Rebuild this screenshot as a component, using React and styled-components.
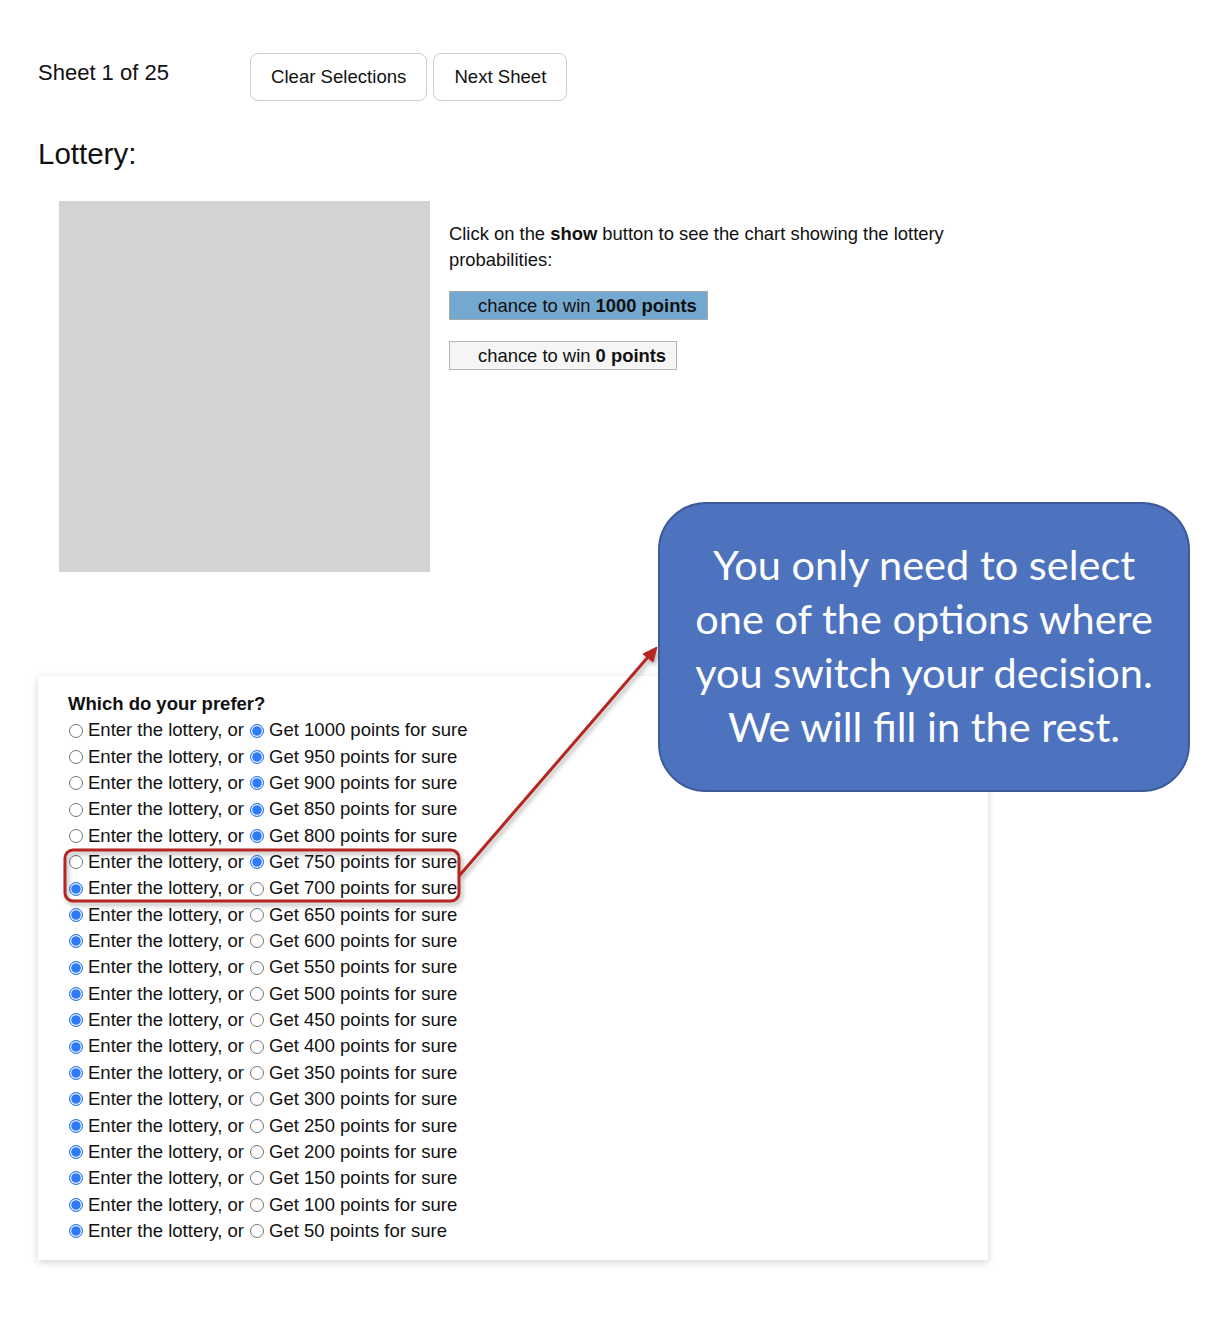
import React from 'react';
import styled, { createGlobalStyle } from 'styled-components';

const Global = createGlobalStyle`
  body {
    margin: 0;
    background: #fff;
    font-family: "Liberation Sans", Arial, Helvetica, sans-serif;
    color: #111;
  }
`;

const Page = styled.div`
  position: relative;
  width: 1210px;
  min-height: 1336px;
  padding-left: 38px;
  box-sizing: border-box;
`;

const Header = styled.div`
  display: flex;
  align-items: flex-start;
  padding-top: 53px;
`;

const SheetLabel = styled.div`
  width: 212px;
  font-size: 22px;
  line-height: 40px;
`;

const Buttons = styled.div`
  display: flex;
  gap: 6px;
`;

const Button = styled.button`
  height: 48px;
  padding: 0 20px;
  font-family: inherit;
  font-size: 18.6px;
  color: #111;
  background: #fff;
  border: 1.5px solid #cfcfcf;
  border-radius: 8px;
`;

const Heading = styled.h2`
  margin: 36px 0 30px;
  font-size: 29.5px;
  font-weight: normal;
  line-height: 34px;
`;

const LotteryRow = styled.div`
  display: flex;
  gap: 19px;
  padding-left: 21px;
`;

const Chart = styled.div`
  width: 371px;
  height: 371px;
  background: #d3d3d3;
  flex-shrink: 0;
`;

const Info = styled.div`
  padding-top: 20px;
  width: 540px;
  font-size: 18.4px;
  line-height: 26px;
`;

const Legend = styled.div`
  display: inline-block;
  margin-top: ${p => p.$first ? 18 : 21}px;
  height: 29px;
  line-height: 27px;
  box-sizing: border-box;
  padding: 0 10px 0 28px;
  background: ${p => p.$fill};
  border: 1.5px solid ${p => p.$border};
  font-size: 18.4px;
`;

const Card = styled.div`
  margin-top: 104px;
  width: 950px;
  box-sizing: border-box;
  padding: 15px 30px 16px;
  background: #fff;
  box-shadow: 0 2px 8px rgba(0, 0, 0, 0.18);
  font-size: 18.5px;
`;

const Line = styled.div`
  height: 26.35px;
  line-height: 26.35px;
  display: flex;
  align-items: center;
  white-space: pre;
  font-weight: ${p => p.$bold ? 'bold' : 'normal'};
`;

const Radio = styled.span`
  width: 14px;
  height: 14px;
  box-sizing: border-box;
  border-radius: 50%;
  margin: 0 5px 0 1px;
  flex-shrink: 0;
  ${p => p.$on
    ? 'background: #2f7bf5; border: 1.5px solid #2f7bf5; box-shadow: inset 0 0 0 1.2px #fff;'
    : 'background: #fff; border: 1px solid #767676;'}
`;

const Callout = styled.div`
  position: absolute;
  left: 658px;
  top: 502px;
  width: 532px;
  height: 290px;
  box-sizing: border-box;
  background: #4e73be;
  border: 2px solid #3c5a9a;
  border-radius: 48px;
  color: #fff;
  font-family: Lato, "Open Sans", sans-serif;
  font-size: 41.5px;
  line-height: 54px;
  text-align: center;
  padding-top: 33px;
`;

const Overlay = styled.svg`
  position: absolute;
  left: 0;
  top: 0;
  pointer-events: none;
`;

const amounts = Array.from({ length: 20 }, (_, i) => 1000 - i * 50);

export default function App() {
  return (
    <Page>
      <Global />
      <Header>
        <SheetLabel>Sheet 1 of 25</SheetLabel>
        <Buttons>
          <Button>Clear Selections</Button>
          <Button>Next Sheet</Button>
        </Buttons>
      </Header>
      <Heading>Lottery:</Heading>
      <LotteryRow>
        <Chart />
        <Info>
          Click on the <b>show</b> button to see the chart showing the lottery probabilities:
          <div>
            <Legend $first $fill="#74a9cf" $border="#a9a9a9">
              chance to win <b>1000 points</b>
            </Legend>
          </div>
          <div>
            <Legend $fill="#f5f5f5" $border="#b5b5b5">
              chance to win <b>0 points</b>
            </Legend>
          </div>
        </Info>
      </LotteryRow>
      <Card>
        <Line $bold>Which do your prefer?</Line>
        {amounts.map(a => {
          const sure = a >= 750;
          return (
            <Line key={a}>
              <Radio $on={!sure} />
              {'Enter the lottery, or '}
              <Radio $on={sure} />
              {`Get ${a} points for sure`}
            </Line>
          );
        })}
      </Card>
      <Overlay width="1210" height="1336">
        <defs>
          <filter id="sh" x="-20%" y="-20%" width="140%" height="140%">
            <feDropShadow dx="2" dy="3" stdDeviation="2" floodColor="#000" floodOpacity="0.3" />
          </filter>
        </defs>
        <g filter="url(#sh)" fill="none" stroke="#b42620" strokeWidth="3">
          <rect x="65" y="850" width="394" height="51" rx="8" />
          <line x1="459" y1="876" x2="648" y2="657" />
          <polygon points="657,647 643,654 653,662" fill="#b42620" strokeWidth="1" />
        </g>
      </Overlay>
      <Callout>
        You only need to select<br />
        one of the options where<br />
        you switch your decision.<br />
        We will fill in the rest.
      </Callout>
    </Page>
  );
}
